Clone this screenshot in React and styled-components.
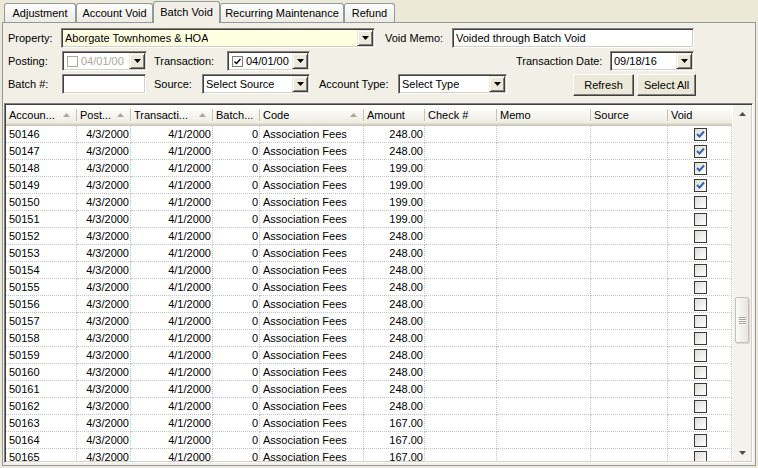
import React from 'react'
import styled, { createGlobalStyle } from 'styled-components'

const GlobalStyle = createGlobalStyle`
  html, body {
    margin: 0;
    padding: 0;
    background: #ece9d8;
  }
  body {
    font-family: "Liberation Sans", Arial, sans-serif;
    font-size: 11px;
    color: #000;
  }
  * {
    box-sizing: border-box;
  }
`

const COLUMNS = '71px 54px 82px 47px 104px 61px 72px 94px 77px 64px'

const Window = styled.div`
  width: 758px;
  height: 468px;
  display: flex;
  flex-direction: column;
  overflow: hidden;
  background: #ece9d8;
`

const TabStrip = styled.div`
  display: flex;
  align-items: flex-end;
  height: 22px;
  padding-left: 4px;
  position: relative;
  z-index: 1;
`

const Tab = styled.div`
  width: ${p => p.$w}px;
  height: ${p => (p.$active ? 22 : 19)}px;
  margin-bottom: ${p => (p.$active ? -1 : 0)}px;
  border: 1px solid #919b9c;
  border-bottom: none;
  border-radius: 3px 3px 0 0;
  background: ${p => (p.$active ? '#f1efe6' : 'linear-gradient(#fefefd, #ecebe5)')};
  display: flex;
  align-items: center;
  justify-content: center;
  padding-bottom: ${p => (p.$active ? 2 : 0)}px;
  white-space: nowrap;
`

const Panel = styled.div`
  flex: 1;
  min-height: 0;
  margin: 0 2px 2px 2px;
  border: 1px solid #919b9c;
  background: #f1efe6;
  display: flex;
  flex-direction: column;
`

const Form = styled.div`
  display: grid;
  grid-template-rows: 20px 20px 22px;
  row-gap: 3px;
  padding: 5px 0 0 5px;
`

const Row = styled.div`
  display: flex;
  align-items: ${p => p.$align || 'center'};
`

const Label = styled.div`
  width: ${p => p.$w}px;
  flex-shrink: 0;
  white-space: nowrap;
`

const Spacer = styled.div`
  width: ${p => p.$w}px;
  flex-shrink: 0;
`

const Sunken = styled.div`
  width: ${p => p.$w}px;
  height: 20px;
  flex-shrink: 0;
  padding: 1px;
  border: 1px solid;
  border-color: #808080 #ffffff #ffffff #808080;
  box-shadow: inset 1px 1px 0 #404040, inset -1px -1px 0 #d4d0c8;
  background: ${p => p.$bg || '#fff'};
  display: flex;
  align-items: center;
`

const FieldText = styled.span`
  padding-left: ${p => p.$pl ?? 2}px;
  color: ${p => (p.$disabled ? '#aca899' : '#000')};
  white-space: nowrap;
  overflow: hidden;
`

const DropButton = styled.div`
  width: 16px;
  height: 16px;
  flex-shrink: 0;
  margin-left: auto;
  background: #ece9d8;
  border: 1px solid;
  border-color: #ece9d8 #404040 #404040 #ece9d8;
  box-shadow: inset 1px 1px 0 #fff, inset -1px -1px 0 #808080;
  display: flex;
  align-items: center;
  justify-content: center;
`

const DateCheck = styled.div`
  width: 11px;
  height: 11px;
  margin-left: 3px;
  flex-shrink: 0;
  border: 1px solid ${p => (p.$disabled ? '#aca899' : '#808080')};
  background: #fff;
  display: flex;
  align-items: center;
  justify-content: center;
`

const Button = styled.div`
  width: ${p => p.$w}px;
  height: 22px;
  flex-shrink: 0;
  margin-right: ${p => p.$mr || 0}px;
  border: 1px solid;
  border-color: #ffffff #404040 #404040 #ffffff;
  box-shadow: inset -1px -1px 0 #808080;
  background: #ece9d8;
  display: flex;
  align-items: center;
  justify-content: center;
`

const GridFrame = styled.div`
  flex: 1;
  min-height: 0;
  margin: 7px 2px 2px 1px;
  border: 1px solid;
  border-color: #808080 #ffffff #ffffff #808080;
  box-shadow: inset 1px 1px 0 #404040, inset -1px -1px 0 #d4d0c8;
  padding: 1px;
  display: flex;
  background: #fff;
`

const GridMain = styled.div`
  width: 726px;
  flex-shrink: 0;
  display: flex;
  flex-direction: column;
  overflow: hidden;
`

const HeaderRow = styled.div`
  display: grid;
  grid-template-columns: ${COLUMNS};
  height: 21px;
  flex-shrink: 0;
  background: linear-gradient(#ffffff, #f4f3ee 55%, #ebeadb);
  box-shadow: inset 0 -1px 0 #cbc7b8, inset 0 -2px 0 #d6d2c2, inset 0 -3px 0 #e2decd;
`

const HeadCell = styled.div`
  position: relative;
  display: flex;
  align-items: center;
  padding: 0 0 1px 3px;
  white-space: nowrap;
  overflow: hidden;
  &::after {
    content: '';
    position: absolute;
    right: 0;
    top: 4px;
    bottom: 5px;
    width: 1px;
    background: #c7c5b2;
    box-shadow: 1px 0 0 #fff;
    display: ${p => (p.$last ? 'none' : 'block')};
  }
`

const SortArrow = styled.svg`
  margin-left: auto;
  margin-right: 7px;
  flex-shrink: 0;
`

const Body = styled.div`
  flex: 1;
  overflow: hidden;
`

const DataRow = styled.div`
  display: grid;
  grid-template-columns: ${COLUMNS};
  height: 17px;
`

const Cell = styled.div`
  border-right: 1px dotted #c4c4c4;
  border-bottom: 1px dotted #c4c4c4;
  padding: 0 ${p => (p.$align === 'right' ? 1 : 2)}px 0 3px;
  line-height: 16px;
  text-align: ${p => p.$align || 'left'};
  white-space: nowrap;
  overflow: hidden;
  display: ${p => (p.$center ? 'flex' : 'block')};
  align-items: center;
  justify-content: center;
`

const VoidBox = styled.div`
  width: 13px;
  height: 13px;
  border: 1px solid #3a3a3a;
  background: linear-gradient(135deg, #dcdcd7, #ffffff);
  display: flex;
  align-items: center;
  justify-content: center;
`

const ScrollBar = styled.div`
  flex: 1;
  display: flex;
  flex-direction: column;
  background: #f3f2ed;
  border-left: 1px solid #fdfdfb;
`

const ScrollArrow = styled.div`
  height: 17px;
  flex-shrink: 0;
  display: flex;
  align-items: center;
  justify-content: center;
`

const Track = styled.div`
  flex: 1;
`

const Thumb = styled.div`
  margin: 175px 2px 0 2px;
  height: 46px;
  border: 1px solid #c3c1b7;
  border-radius: 2px;
  background: linear-gradient(90deg, #fbfbf8, #e7e5dc);
  box-shadow: 1px 1px 0 #d9d7cd;
  display: flex;
  flex-direction: column;
  align-items: center;
  justify-content: center;
  gap: 1px;
`

const Grip = styled.div`
  width: 7px;
  height: 1px;
  background: #a3a196;
  box-shadow: 0 1px 0 #fff;
`

const Arrow = ({ up, color = '#000' }) => (
  <svg width="7" height="4" viewBox="0 0 7 4">
    <polygon points={up ? '0,4 7,4 3.5,0' : '0,0 7,0 3.5,4'} fill={color} />
  </svg>
)

const Combo = ({ w, text, bg }) => (
  <Sunken $w={w} $bg={bg}>
    <FieldText>{text}</FieldText>
    <DropButton>
      <Arrow />
    </DropButton>
  </Sunken>
)

const DatePicker = ({ w, value, checked, disabled }) => (
  <Sunken $w={w}>
    <DateCheck $disabled={disabled}>
      {checked && (
        <svg width="7" height="7" viewBox="0 0 7 7">
          <path d="M0.5 3.5 L2.5 5.5 L6.5 1" stroke="#000" strokeWidth="1.4" fill="none" />
        </svg>
      )}
    </DateCheck>
    <FieldText $pl={3} $disabled={disabled}>{value}</FieldText>
    <DropButton>
      <Arrow />
    </DropButton>
  </Sunken>
)

const TABS = [
  { label: 'Adjustment', w: 72 },
  { label: 'Account Void', w: 77 },
  { label: 'Batch Void', w: 67, active: true },
  { label: 'Recurring Maintenance', w: 124 },
  { label: 'Refund', w: 51 },
]

const HEADERS = [
  { label: 'Accoun...', sort: true },
  { label: 'Post...', sort: true },
  { label: 'Transacti...', sort: true },
  { label: 'Batch...' },
  { label: 'Code', sort: true },
  { label: 'Amount' },
  { label: 'Check #' },
  { label: 'Memo' },
  { label: 'Source' },
  { label: 'Void' },
]

const AMOUNTS = [
  '248.00', '248.00', '199.00', '199.00', '199.00', '199.00', '248.00', '248.00', '248.00', '248.00',
  '248.00', '248.00', '248.00', '248.00', '248.00', '248.00', '248.00', '167.00', '167.00', '167.00',
]

const ROWS = AMOUNTS.map((amount, i) => ({
  account: String(50146 + i),
  amount,
  void: i < 4,
}))

export default function App() {
  return (
    <Window>
      <GlobalStyle />
      <TabStrip>
        {TABS.map(t => (
          <Tab key={t.label} $w={t.w} $active={t.active}>{t.label}</Tab>
        ))}
      </TabStrip>
      <Panel>
        <Form>
          <Row>
            <Label $w={53}>Property:</Label>
            <Combo w={314} text="Aborgate Townhomes & HOA" bg="#ffffe1" />
            <Spacer $w={10} />
            <Label $w={67}>Void Memo:</Label>
            <Sunken $w={242}>
              <FieldText>Voided through Batch Void</FieldText>
            </Sunken>
          </Row>
          <Row>
            <Label $w={54}>Posting:</Label>
            <DatePicker w={85} value="04/01/00" disabled />
            <Spacer $w={7} />
            <Label $w={73}>Transaction:</Label>
            <DatePicker w={83} value="04/01/00" checked />
            <Spacer $w={206} />
            <Label $w={94}>Transaction Date:</Label>
            <Sunken $w={84}>
              <FieldText>09/18/16</FieldText>
              <DropButton>
                <Arrow />
              </DropButton>
            </Sunken>
          </Row>
          <Row $align="flex-start">
            <Label $w={54} style={{ lineHeight: '20px' }}>Batch #:</Label>
            <Sunken $w={84} />
            <Spacer $w={8} />
            <Label $w={48} style={{ lineHeight: '20px' }}>Source:</Label>
            <Combo w={108} text="Select Source" />
            <Spacer $w={9} />
            <Label $w={79} style={{ lineHeight: '20px' }}>Account Type:</Label>
            <Combo w={109} text="Select Type" />
            <Spacer $w={66} />
            <Button $w={61} $mr={3}>Refresh</Button>
            <Button $w={59}>Select All</Button>
          </Row>
        </Form>
        <GridFrame>
          <GridMain>
            <HeaderRow>
              {HEADERS.map((h, i) => (
                <HeadCell key={h.label} $last={i === HEADERS.length - 1}>
                  {h.label}
                  {h.sort && (
                    <SortArrow width="7" height="4" viewBox="0 0 7 4">
                      <polygon points="0,4 7,4 3.5,0" fill="#aca899" />
                    </SortArrow>
                  )}
                </HeadCell>
              ))}
            </HeaderRow>
            <Body>
              {ROWS.map(r => (
                <DataRow key={r.account}>
                  <Cell>{r.account}</Cell>
                  <Cell $align="right">4/3/2000</Cell>
                  <Cell $align="right">4/1/2000</Cell>
                  <Cell $align="right">0</Cell>
                  <Cell>Association Fees</Cell>
                  <Cell $align="right">{r.amount}</Cell>
                  <Cell />
                  <Cell />
                  <Cell />
                  <Cell $center>
                    <VoidBox>
                      {r.void && (
                        <svg width="9" height="8" viewBox="0 0 9 8">
                          <path d="M1 4 L3.5 6.5 L8 1.5" stroke="#2f64b0" strokeWidth="2" fill="none" />
                        </svg>
                      )}
                    </VoidBox>
                  </Cell>
                </DataRow>
              ))}
            </Body>
          </GridMain>
          <ScrollBar>
            <ScrollArrow>
              <Arrow up color="#4d4d4d" />
            </ScrollArrow>
            <Track>
              <Thumb>
                <Grip />
                <Grip />
                <Grip />
                <Grip />
              </Thumb>
            </Track>
            <ScrollArrow>
              <Arrow color="#4d4d4d" />
            </ScrollArrow>
          </ScrollBar>
        </GridFrame>
      </Panel>
    </Window>
  )
}
